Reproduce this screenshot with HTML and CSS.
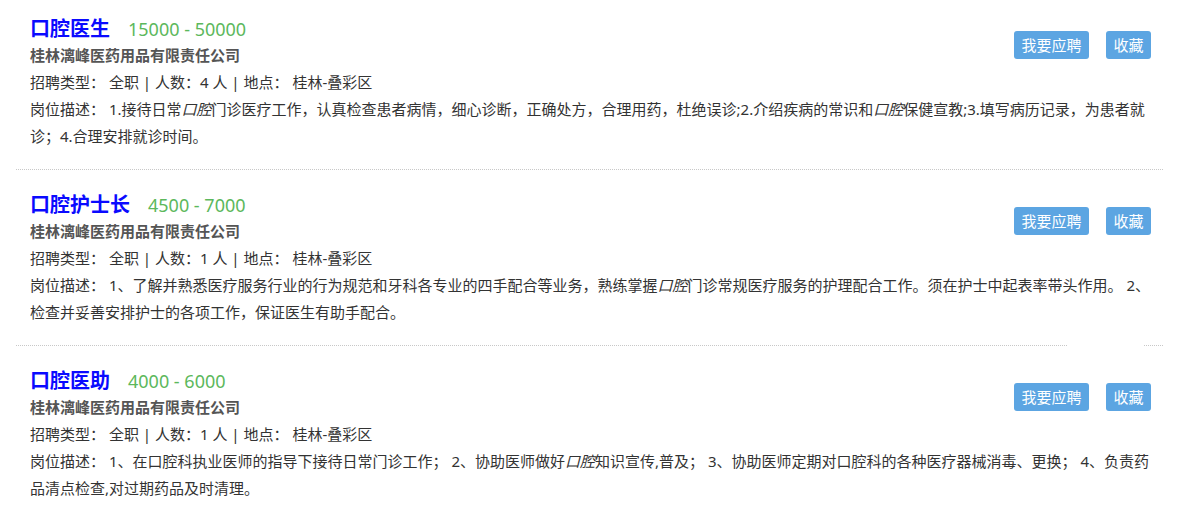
FILE: index.html
```html
<!DOCTYPE html>
<html lang="zh-CN">
<head>
    <meta charset="UTF-8">
    <title>招聘信息</title>
    <link rel="stylesheet" href="styles.css">
</head>
<body>
    <div class="job-list">
        <div class="job">
            <div class="job-head">
                <div class="job-info">
                    <div class="job-title"><a href="#">口腔医生</a><span class="salary">15000 - 50000</span></div>
                    <div class="company">桂林漓峰医药用品有限责任公司</div>
                    <div class="meta">招聘类型： 全职 | 人数：4 人 | 地点： 桂林-叠彩区</div>
                </div>
                <div class="job-actions">
                    <button>我要应聘</button>
                    <button>收藏</button>
                </div>
            </div>
            <div class="desc">岗位描述： 1.接待日常<em>口腔</em>门诊医疗工作，认真检查患者病情，细心诊断，正确处方，合理用药，杜绝误诊;2.介绍疾病的常识和<em>口腔</em>保健宣教;3.填写病历记录，为患者就诊；4.合理安排就诊时间。</div>
        </div>
        <div class="job">
            <div class="job-head">
                <div class="job-info">
                    <div class="job-title"><a href="#">口腔护士长</a><span class="salary">4500 - 7000</span></div>
                    <div class="company">桂林漓峰医药用品有限责任公司</div>
                    <div class="meta">招聘类型： 全职 | 人数：1 人 | 地点： 桂林-叠彩区</div>
                </div>
                <div class="job-actions">
                    <button>我要应聘</button>
                    <button>收藏</button>
                </div>
            </div>
            <div class="desc">岗位描述： 1、了解并熟悉医疗服务行业的行为规范和牙科各专业的四手配合等业务，熟练掌握<em>口腔</em>门诊常规医疗服务的护理配合工作。须在护士中起表率带头作用。 2、检查并妥善安排护士的各项工作，保证医生有助手配合。</div>
            <span class="line-gap"></span>
        </div>
        <div class="job">
            <div class="job-head">
                <div class="job-info">
                    <div class="job-title"><a href="#">口腔医助</a><span class="salary">4000 - 6000</span></div>
                    <div class="company">桂林漓峰医药用品有限责任公司</div>
                    <div class="meta">招聘类型： 全职 | 人数：1 人 | 地点： 桂林-叠彩区</div>
                </div>
                <div class="job-actions">
                    <button>我要应聘</button>
                    <button>收藏</button>
                </div>
            </div>
            <div class="desc">岗位描述： 1、在口腔科执业医师的指导下接待日常门诊工作； 2、协助医师做好<em>口腔</em>知识宣传,普及； 3、协助医师定期对口腔科的各种医疗器械消毒、更换； 4、负责药品清点检查,对过期药品及时清理。</div>
        </div>
    </div>
</body>
</html>
```

FILE: styles.css
```css
body {
    margin: 0;
    padding: 0;
    background: #fff;
    font-family: "Noto Sans", "Noto Sans CJK SC", sans-serif;
    color: #333;
    font-size: 15px;
}
.job-list {
    margin: 0 18px 0 16px;
}
.job {
    position: relative;
    padding: 20px 12px 19px 14px;
    border-bottom: 1px dotted #c8c8c8;
}
.job:first-child {
    padding-top: 14px;
}
.job-head {
    display: flex;
    justify-content: space-between;
    align-items: flex-start;
}
.job-title {
    height: 28px;
    line-height: 28px;
}
.job-title a {
    color: #0a0aff;
    font-family: "Noto Sans CJK SC", sans-serif;
    font-size: 20px;
    font-weight: bold;
    text-decoration: none;
}
.salary {
    color: #5cb85c;
    font-size: 18px;
    margin-left: 18px;
}
.company {
    line-height: 27px;
    font-weight: bold;
    color: #555;
}
.meta {
    line-height: 27px;
}
.desc {
    line-height: 27px;
}
.desc em {
    font-style: italic;
}
.job-actions {
    display: flex;
    gap: 17px;
    margin-top: 17px;
}
.job-actions button {
    height: 28px;
    padding: 0 7.5px;
    border: none;
    border-radius: 3px;
    background: #5ca5e2;
    color: #fff;
    font-family: "Noto Sans CJK SC", sans-serif;
    font-size: 15px;
    line-height: 28px;
    cursor: pointer;
}
.line-gap {
    position: absolute;
    right: 19px;
    bottom: -2px;
    width: 76px;
    height: 3px;
    background: #fff;
}
```
